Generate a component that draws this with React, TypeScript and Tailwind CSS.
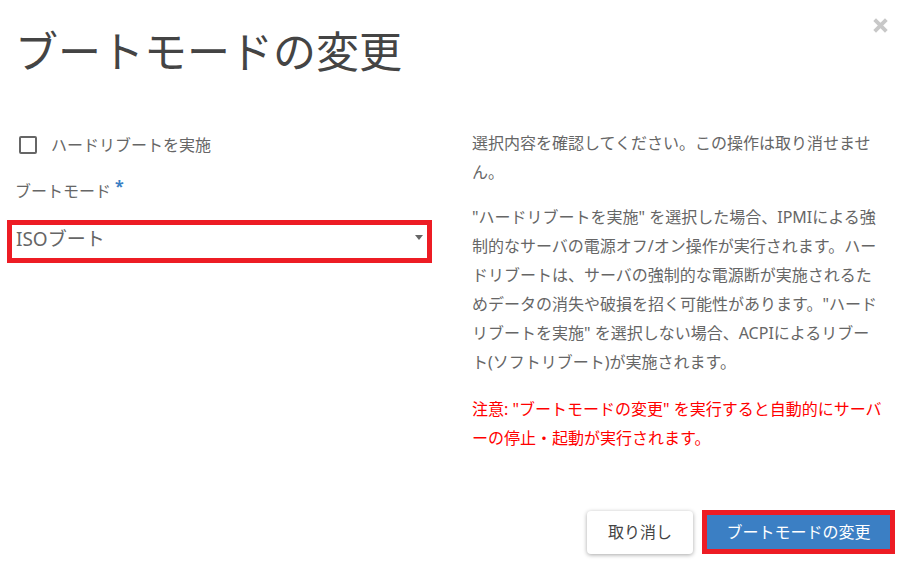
export default function App() {
  return (
    <div
      className="relative w-[903px] h-[572px] bg-white overflow-hidden text-[#666]"
      style={{ fontFamily: '"Noto Sans", "Noto Sans CJK JP", sans-serif' }}
    >
      <button className="absolute right-[13px] top-[15px] w-[20px] h-[20px] flex items-center justify-center text-[#c8c8c8]">
        <svg width="17" height="17" viewBox="0 0 16 16">
          <path d="M2.5 2.5 L13.5 13.5 M13.5 2.5 L2.5 13.5" stroke="currentColor" strokeWidth="3.6" strokeLinecap="butt" />
        </svg>
      </button>

      <h1
        className="pl-[15px] pt-[25px] text-[43px] leading-[49px] text-[#444] font-normal"
        style={{ fontFamily: '"Noto Sans CJK JP", sans-serif' }}
      >
        ブートモードの変更
      </h1>

      <div className="flex mt-[59px]">
        <div className="w-[432px] pl-[7px]">
          <label className="flex items-center gap-[14px] pl-[12px] h-[24px]">
            <span className="w-[18px] h-[18px] border-2 border-[#666] rounded-[2px]" />
            <span className="text-[16px] leading-[24px]">ハードリブートを実施</span>
          </label>

          <div className="mt-[22px] pl-[8px] text-[16px] leading-[24px] flex items-start">
            ブートモード
            <span className="text-[#3b7fc4] text-[16px] leading-[14px] ml-[4px] font-bold">*</span>
          </div>

          <div className="mt-[17px] w-[425px] h-[43px] border-[5px] border-[#ed1c24] flex items-center justify-between pl-[4px] pr-[4px]">
            <span className="text-[19px] leading-[24px] text-[#666] -mt-[6px]">ISOブート</span>
            <svg width="8" height="5" viewBox="0 0 8 5" className="-mt-[8px]">
              <path d="M0 0 L8 0 L4 5 Z" fill="#666" />
            </svg>
          </div>
        </div>

        <div className="ml-[40px] w-[424px] text-[16px] leading-[29px] -mt-[4px] whitespace-nowrap">
          <p>
            選択内容を確認してください。この操作は取り消せませ
            <br />
            ん。
          </p>
          <p className="mt-[16px]">
            "ハードリブートを実施" を選択した場合、IPMIによる強
            <br />
            制的なサーバの電源オフ/オン操作が実行されます。ハー
            <br />
            ドリブートは、サーバの強制的な電源断が実施されるた
            <br />
            めデータの消失や破損を招く可能性があります。"ハード
            <br />
            リブートを実施" を選択しない場合、ACPIによるリブー
            <br />
            ト(ソフトリブート)が実施されます。
          </p>
          <p className="mt-[18px] text-[#ff0000]">
            注意: "ブートモードの変更" を実行すると自動的にサーバ
            <br />
            ーの停止・起動が実行されます。
          </p>
        </div>
      </div>

      <div className="absolute right-[8px] bottom-[18px] flex items-center gap-[9px]">
        <button className="w-[106px] h-[43px] bg-white rounded-[4px] shadow-[0_1px_4px_rgba(0,0,0,0.35)] text-[16px] text-[#444]">
          取り消し
        </button>
        <div className="border-[5px] border-[#ed1c24]">
          <button className="w-[183px] h-[34px] bg-[#3b7fc4] text-white text-[16px]">ブートモードの変更</button>
        </div>
      </div>
    </div>
  );
}
